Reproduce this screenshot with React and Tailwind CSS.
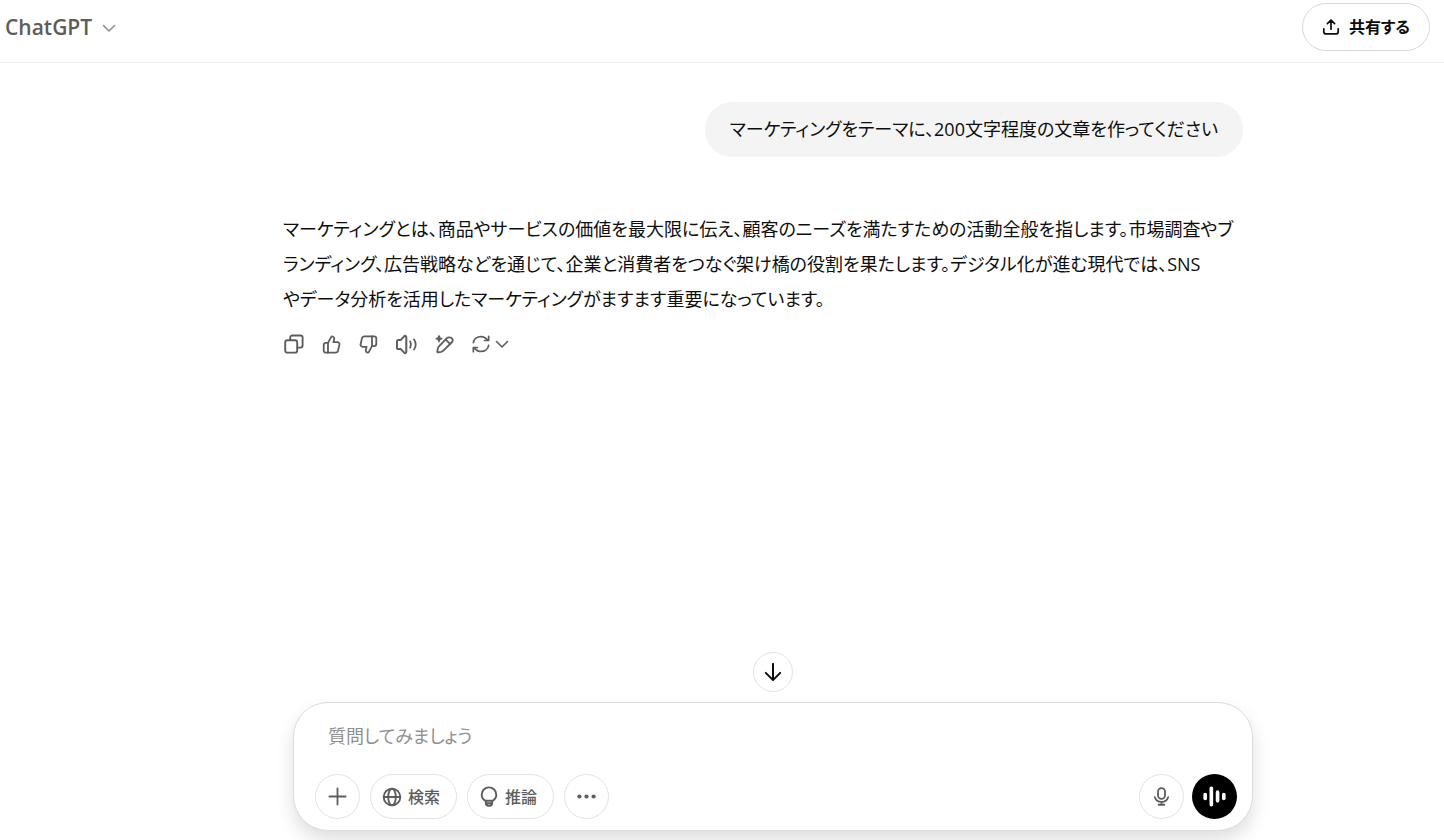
import React, { useState } from 'react';

function Icon({ children, className, viewBox = '0 0 20 20' }) {
  return (
    <svg
      viewBox={viewBox}
      className={className}
      fill="none"
      stroke="currentColor"
      strokeWidth="1.9"
      strokeLinecap="round"
      strokeLinejoin="round"
      aria-hidden="true"
    >
      {children}
    </svg>
  );
}

function ChevronIcon({ className }) {
  return (
    <Icon viewBox="0 0 14 14" className={className}>
      <path d="M1.5 4.5 7 10l5.5-5.5" strokeWidth="1.6" />
    </Icon>
  );
}

function ThumbIcon({ className }) {
  return (
    <Icon className={className}>
      <path d="M6.3 8.3 9.6 2.3c.4-.8 1.1-1 1.8-.7 1.3.6 1.7 1.7 1.4 3L12 7.6h4.2c1.5 0 2.4 1.2 2.1 2.6l-1.4 6.2c-.3 1.4-1.2 2.2-2.6 2.2H4.2c-1.5 0-2.4-.9-2.4-2.3v-5.5c0-1.5.9-2.5 2.4-2.5Z" />
      <path d="M6.3 8.3v10.3" />
    </Icon>
  );
}

function Header() {
  return (
    <header className="flex h-[63px] shrink-0 items-start justify-between border-b border-[#ededed] pl-[5px] pr-[14px] pt-[3px]">
      <button className="flex h-[50px] items-center gap-[10px] font-['Open_Sans','Noto_Sans',sans-serif] text-[21px] font-semibold text-[#5d5d5d]">
        ChatGPT
        <ChevronIcon className="size-[14px] text-[#8f8f8f]" />
      </button>
      <button className="flex h-12 items-center gap-[9px] rounded-full border border-[#d9d9d9] px-[19px] text-[16px] font-bold text-[#0d0d0d]">
        <Icon className="size-[18px]">
          <path d="M10 12.5V2.5M6 6.2l4-4 4 4M2 12v3.2c0 1.5 1 2.5 2.5 2.5h11c1.5 0 2.5-1 2.5-2.5V12" />
        </Icon>
        共有する
      </button>
    </header>
  );
}

function MessageActions() {
  return (
    <div className="mt-[15px] flex h-6 items-center gap-[18px] pl-px text-[#5d5d5d]">
      <button aria-label="コピー">
        <Icon className="size-5">
          <rect x="1.2" y="6.2" width="12" height="12.4" rx="2.2" />
          <path d="M6.2 6V3.6c0-1.2.9-2.1 2.1-2.1h8.2c1.2 0 2.1.9 2.1 2.1v7.9c0 1.2-.9 2.1-2.1 2.1h-3" />
        </Icon>
      </button>
      <button aria-label="良い回答です">
        <ThumbIcon className="size-[19px]" />
      </button>
      <button aria-label="良くない回答です">
        <ThumbIcon className="size-[19px] rotate-180" />
      </button>
      <button aria-label="音声で読み上げる">
        <Icon className="size-[21px]">
          <path d="M9.8 3v14c0 1.2-1.2 1.6-2 .8L4.6 14.4H2.4C1.4 14.4.9 13.8.9 13V7c0-.8.5-1.4 1.5-1.4h2.2l3.2-3.4c.8-.8 2-.4 2 .8Z" />
          <path d="M13.5 7c.8 1.9.8 4.1 0 6M17.2 5.2c1.9 2.9 1.9 6.7 0 9.6" strokeWidth="1.7" />
        </Icon>
      </button>
      <button aria-label="キャンバスで編集する">
        <Icon className="size-[19px]">
          <path d="m12.2 3.600-8 8.300c-.7.7-1 1.300-1.200 2.200l-.6 3.400c-.1.600.2.900.8.800l3.400-.6c.9-.2 1.500-.5 2.200-1.200l8.700-8.600c1.400-1.400 1.400-3.100.2-4.300s-3.900-1.500-5.500 0ZM11.800 5.300l4.300 4.300" />
          <path d="M4.200.6c.4 2.200 1.100 2.900 3.300 3.300C5.300 4.300 4.600 5 4.200 7.200 3.800 5 3.100 4.300.9 3.900 3.100 3.500 3.800 2.800 4.200.6Z" fill="currentColor" strokeWidth="1.2" />
        </Icon>
      </button>
      <button aria-label="モデルを切り替える" className="flex items-center gap-[5px]">
        <Icon className="size-[18px]">
          <path d="M1.5 8.5C2.2 4.5 5.7 1.7 9.9 1.7c3 0 5.600 1.500 7.300 3.900M18.500 1.500v4.600h-4.600M18.500 11.500c-.7 4-4.200 6.800-8.400 6.800-3 0-5.600-1.500-7.300-3.900M1.500 18.500v-4.600h4.600" />
        </Icon>
        <ChevronIcon className="size-[14px]" />
      </button>
    </div>
  );
}

function Conversation() {
  return (
    <main className="min-h-0 flex-1 overflow-hidden pl-[82px]">
      <div className="mx-auto max-w-[960px] pt-[39px] text-[18px] leading-[35px] text-[#0d0d0d]">
        <div className="flex justify-end">
          <p className="rounded-[27px] bg-[#f4f4f4] px-[25px] py-[10px]">
            マーケティングをテーマに、200文字程度の文章を作ってください
          </p>
        </div>
        <p className="mt-[55px]">
          マーケティングとは、商品やサービスの価値を最大限に伝え、顧客のニーズを満たすための活動全般を指します。市場調査やブ
          <br className="hidden xl:block" />
          ランディング、広告戦略などを通じて、企業と消費者をつなぐ架け橋の役割を果たします。デジタル化が進む現代では、SNS
          <br className="hidden xl:block" />
          やデータ分析を活用したマーケティングがますます重要になっています。
        </p>
        <MessageActions />
      </div>
    </main>
  );
}

function RoundButton({ label, children }) {
  return (
    <button
      aria-label={label}
      className="flex size-[45px] items-center justify-center rounded-full border border-[#e3e3e3]"
    >
      {children}
    </button>
  );
}

function PillButton({ icon, label }) {
  return (
    <button className="flex h-[45px] items-center gap-[6px] rounded-full border border-[#e3e3e3] pl-[11px] pr-4 text-[16px] font-medium">
      {icon}
      {label}
    </button>
  );
}

function Composer() {
  const [text, setText] = useState('');

  return (
    <footer className="shrink-0 pb-[9px] pl-[102px]">
      <div className="mx-auto flex max-w-[960px] flex-col items-center gap-[10px]">
        <button
          aria-label="一番下へスクロール"
          className="flex size-10 items-center justify-center rounded-full border border-[#e3e3e3] bg-white text-[#0d0d0d]"
        >
          <Icon className="size-[18px]">
            <path d="M10 1v18M2 11l8 8 8-8" strokeWidth="2.2" />
          </Icon>
        </button>
        <form
          onSubmit={(e) => e.preventDefault()}
          className="w-full rounded-[35px] border border-[#dcdcdc] bg-white pb-[11px] pl-[21px] pr-[15px] pt-[15px] shadow-[0_9px_18px_rgba(0,0,0,0.13)]"
        >
          <input
            type="text"
            aria-label="質問してみましょう"
            placeholder="質問してみましょう"
            value={text}
            onChange={(e) => setText(e.target.value)}
            className="mb-5 block h-9 w-full px-[13px] text-[18px] text-[#0d0d0d] placeholder:text-[#8f8f8f] focus:outline-none"
          />
          <div className="flex items-center justify-between text-[#5d5d5d]">
            <div className="flex gap-[10px]">
              <RoundButton label="ファイルを追加">
                <Icon className="size-[19px]">
                  <path d="M10 1.500v17M1.500 10h17" />
                </Icon>
              </RoundButton>
              <PillButton
                label="検索"
                icon={
                  <Icon className="size-5">
                    <circle cx="10" cy="10" r="8.300" />
                    <ellipse cx="10" cy="10" rx="3.800" ry="8.300" />
                    <path d="M1.700 10h16.600" />
                  </Icon>
                }
              />
              <PillButton
                label="推論"
                icon={
                  <Icon className="h-[22px] w-5" viewBox="0 0 20 22">
                    <path d="M6.600 14.800C4.200 13.600 2.700 11.300 2.700 8.700a7.300 7.300 0 0 1 14.600 0c0 2.600-1.500 4.900-3.900 6.100Z" />
                    <path d="M6.800 15v1.800c0 1.900 1 3 2.700 3h1c1.700 0 2.700-1.100 2.700-3V15M7 17.300h6" />
                  </Icon>
                }
              />
              <RoundButton label="その他">
                <Icon className="size-[19px]">
                  <g fill="currentColor" stroke="none">
                    <circle cx="2.500" cy="10" r="2.200" />
                    <circle cx="10" cy="10" r="2.200" />
                    <circle cx="17.500" cy="10" r="2.200" />
                  </g>
                </Icon>
              </RoundButton>
            </div>
            <div className="flex gap-2">
              <RoundButton label="音声入力">
                <Icon className="size-[19px]">
                  <rect x="6.300" y="1.200" width="7.400" height="11.200" rx="3.700" />
                  <path d="M3 10.700c.9 2.900 3.700 4.900 7 4.900s6.100-2 7-4.900M10 15.600v3M7 18.700h6" />
                </Icon>
              </RoundButton>
              <button
                aria-label="音声モードを開始する"
                className="flex size-[45px] items-center justify-center rounded-full bg-black text-white"
              >
                <Icon className="size-[23px]" viewBox="0 0 24 24">
                  <path d="M2.300 10v4M21.700 10v4" strokeWidth="3.800" />
                  <path d="M8.700 3.500v17M15.200 7.500v9" strokeWidth="3.800" />
                </Icon>
              </button>
            </div>
          </div>
        </form>
      </div>
    </footer>
  );
}

export default function App() {
  return (
    <div className="flex h-screen flex-col overflow-hidden bg-white font-['Open_Sans','Noto_Sans_CJK_JP',sans-serif] [font-feature-settings:'palt']">
      <Header />
      <Conversation />
      <Composer />
    </div>
  );
}
